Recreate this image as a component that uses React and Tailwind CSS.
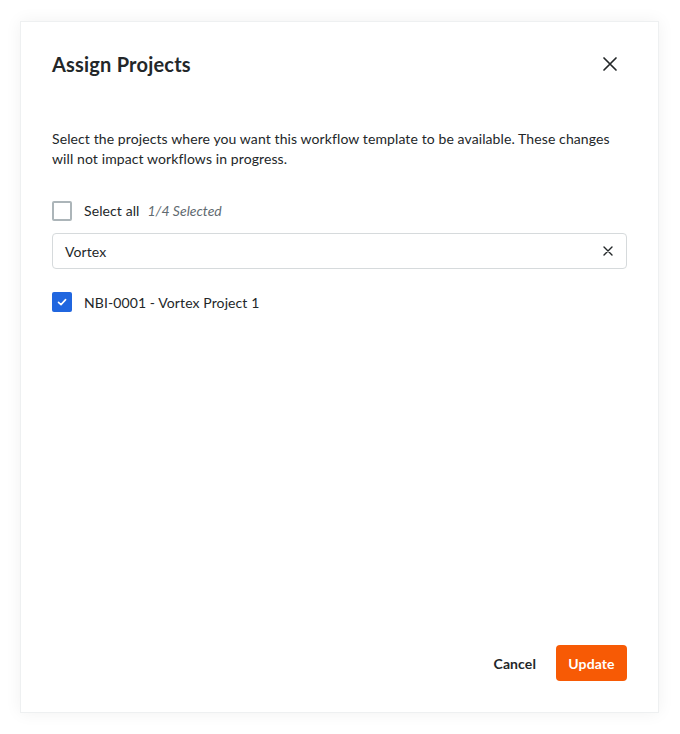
export default function App() {
  return (
    <div className="w-[680px] h-[734px] bg-white pt-[21px] pl-[20px]" style={{ fontFamily: "Lato, 'Noto Sans', sans-serif" }}>
      <div className="w-[639px] h-[692px] bg-white flex flex-col shadow-[0_0_16px_rgba(0,0,0,0.06)] border border-[#eef0f1] px-[31px] pt-[30px] pb-[31px] text-[#232729]">
        <div className="flex items-center justify-between h-[24px]">
          <h1 className="text-[20px] font-bold leading-[24px] tracking-[0.2px] text-[#232729]">Assign Projects</h1>
          <button className="w-[24px] h-[24px] flex items-center justify-center mr-[5px] text-[#232729]">
            <svg width="16" height="16" viewBox="0 0 16 16" fill="none" stroke="currentColor" strokeWidth="1.7" strokeLinecap="round">
              <path d="M2 2L14 14M14 2L2 14" />
            </svg>
          </button>
        </div>
        <p className="mt-[53px] max-w-[566px] text-[14px] leading-[20px] tracking-[0.1px] text-[#232729]">
          Select the projects where you want this workflow template to be available. These changes will not impact workflows in progress.
        </p>
        <div className="mt-[32px] flex items-center h-[20px]">
          <div className="w-[20px] h-[20px] rounded-[2px] border-2 border-[#acb5b9] bg-white" />
          <span className="ml-[12px] text-[14px] leading-[20px] tracking-[0.1px] text-[#232729]">Select all</span>
          <span className="ml-[8px] text-[14px] leading-[20px] italic text-[#5f6a70]">1/4 Selected</span>
        </div>
        <div className="mt-[12px] h-[36px] rounded-[4px] border border-[#d6dadc] flex items-center pl-[12px] pr-[13px]">
          <span className="flex-1 text-[14px] tracking-[0.1px] text-[#232729]">Vortex</span>
          <svg width="10" height="10" viewBox="0 0 10 10" fill="none" stroke="#232729" strokeWidth="1.4" strokeLinecap="round">
            <path d="M1 1L9 9M9 1L1 9" />
          </svg>
        </div>
        <div className="mt-[23px] flex items-center h-[20px]">
          <div className="w-[20px] h-[20px] rounded-[2px] bg-[#2066df] flex items-center justify-center">
            <svg width="12" height="12" viewBox="0 0 12 12" fill="none" stroke="white" strokeWidth="1.6" strokeLinecap="round" strokeLinejoin="round">
              <path d="M2.5 6.3L5 8.6L9.6 3.6" />
            </svg>
          </div>
          <span className="ml-[12px] text-[14px] tracking-[0.1px] text-[#232729]">NBI-0001 - Vortex Project 1</span>
        </div>
        <div className="flex-1" />
        <div className="flex items-center justify-end">
          <button className="h-[36px] px-[12px] text-[14px] font-bold tracking-[0.1px] text-[#232729]">Cancel</button>
          <button className="ml-[8px] h-[36px] w-[71px] rounded-[4px] bg-[#f75a05] text-white text-[14px] font-bold tracking-[0.1px]">Update</button>
        </div>
      </div>
    </div>
  );
}
